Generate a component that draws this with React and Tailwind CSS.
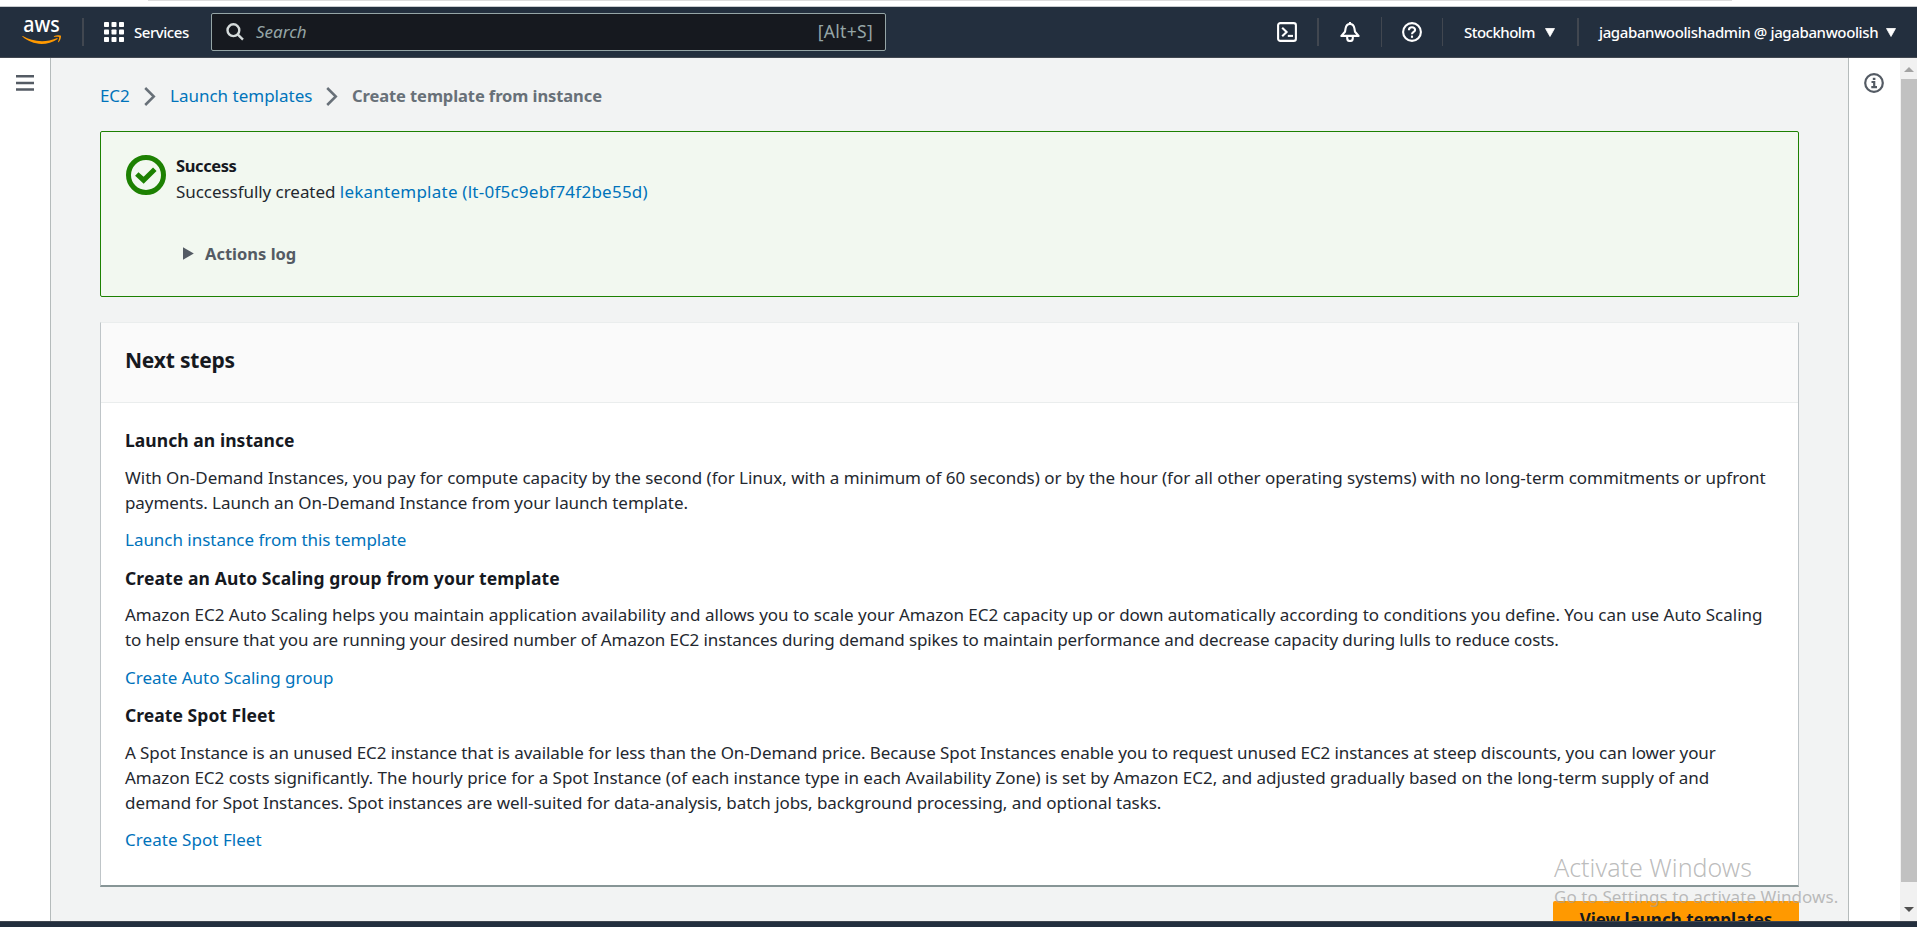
import React from "react";

function AwsLogo() {
  return (
    <svg width="40" height="28" viewBox="0 -1 40 28" className="block overflow-visible">
      <text x="1.300" y="12.800" textLength="36.500" lengthAdjust="spacingAndGlyphs" fill="#fff" fontSize="22.500" fontWeight="500" fontFamily="Noto Sans, sans-serif">aws</text>
      <g transform="translate(0 1.600) scale(.129)" fill="#ff9900">
        <path d="M273.5,143.7c-32.9,24.3-80.7,37.2-121.8,37.2c-57.6,0-109.5-21.3-148.7-56.7c-3.1-2.8-0.3-6.6,3.4-4.4c42.4,24.6,94.7,39.5,148.8,39.5c36.5,0,76.6-7.6,113.5-23.2C274.2,133.6,278.9,139.7,273.5,143.7z" />
        <path d="M287.2,128.1c-4.2-5.4-27.8-2.6-38.5-1.3c-3.2,0.4-3.7-2.4-0.8-4.5c18.8-13.2,49.7-9.4,53.3-5c3.6,4.5-1,35.4-18.6,50.2c-2.7,2.3-5.3,1.1-4.1-1.9C282.5,155.7,291.4,133.4,287.2,128.1z" />
      </g>
    </svg>
  );
}

function GridIcon() {
  return (
    <svg width="20" height="20" viewBox="0 0 20 20" fill="#fff" className="block">
      {[0, 7.5, 15].map((y) => [0, 7.5, 15].map((x) => <rect key={x + "-" + y} x={x} y={y} width="5" height="5" rx="0.8" />))}
    </svg>
  );
}

function SearchIcon() {
  return (
    <svg width="18" height="18" viewBox="0 0 18 18" fill="none" stroke="#d5dbdb" strokeWidth="2.4" className="block">
      <circle cx="7.4" cy="7.2" r="5.9" />
      <path d="M11.6 11.4 17 16.6" />
    </svg>
  );
}

function ShellIcon() {
  return (
    <svg width="20" height="20" viewBox="0 0 20 20" fill="none" stroke="#fff" strokeWidth="2.1" className="block">
      <rect x="1.1" y="1.1" width="17.8" height="17.8" rx="2.2" />
      <path d="M5.2 5.7 9.6 10 5.2 14.3" />
      <path d="M10.8 13.9H16" />
    </svg>
  );
}

function BellIcon() {
  return (
    <svg width="20" height="20" viewBox="0 0 20 20" fill="none" stroke="#fff" strokeWidth="2.1" strokeLinejoin="round" className="block">
      <path d="M10 2C7.4 2 6 3.8 5.6 6.4L5 9.8 1.4 13.9H18.6L15 9.8 14.4 6.4C14 3.8 12.600 2 10 2Z" />
      <path d="M10 0V2" />
      <path d="M7.200 14.500V16.200A2.800 2.800 0 0 0 12.800 16.200V14.500" />
    </svg>
  );
}

function HelpIcon() {
  return (
    <svg width="20" height="20" viewBox="0 0 20 20" fill="none" stroke="#fff" strokeWidth="2.1" className="block">
      <circle cx="10" cy="10" r="8.900" />
      <path d="M6.900 8.200C6.900 6.300 8.200 5.200 10 5.200S13.100 6.300 13.100 7.900C13.100 10 10 9.900 10 12.300" />
      <path d="M10 13.600V15.800" />
    </svg>
  );
}

function Caret() {
  return (
    <svg width="10" height="9" viewBox="0 0 10 9" fill="#fff" className="block">
      <path d="M.5.5H9.500L5 8.500Z" stroke="#fff" strokeWidth=".8" strokeLinejoin="round" />
    </svg>
  );
}

function Chevron() {
  return (
    <svg width="12" height="19" viewBox="0 0 12 19" fill="none" stroke="#687078" strokeWidth="2.500" className="mt-0.5 block">
      <path d="M1.200 1 9.800 9.500 1.200 18" />
    </svg>
  );
}

function InfoIcon() {
  return (
    <svg width="20" height="20" viewBox="0 0 20 20" fill="none" stroke="#545b64" strokeWidth="2.200" className="block">
      <circle cx="10" cy="10" r="8.800" />
      <path d="M8.800 5.900H11.400" strokeWidth="2.200" />
      <path d="M7.500 9H10.200V14M7.300 14.200H13" />
    </svg>
  );
}

function SuccessIcon() {
  return (
    <svg width="40" height="40" viewBox="0 0 40 40" fill="none" stroke="#1d8102" className="block">
      <circle cx="20" cy="20" r="17.500" strokeWidth="5" />
      <path d="M10.800 19 17.600 25.200 28.800 14.300" strokeWidth="5" />
    </svg>
  );
}

function Link({ children, className = "" }) {
  return <a className={"text-[#0073bb] " + className}>{children}</a>;
}

function TopBar() {
  return (
    <header className="flex h-[51px] shrink-0 items-center border-b border-[#414750] bg-[#232f3e] pr-[21px] pl-[22px] text-[15px] font-medium text-white">
      <div className="w-15"><AwsLogo /></div>
      <div className="h-7 w-0.5 bg-[#414750]" />
      <div className="ml-5 flex w-[107px] items-center gap-2.5">
        <GridIcon />
        <span className="tracking-[-0.46px]">Services</span>
      </div>
      <div className="flex h-[38px] w-[675px] items-center rounded-xs border border-[#95a5a6] bg-[#16191f] pr-3 pl-3.5 font-normal text-[#95a5a6]">
        <SearchIcon />
        <span className="ml-3 grow pb-0.5 text-[17px] italic">Search</span>
        <span className="pb-0.5 text-[17.5px] tracking-[0.3px]">[Alt+S]</span>
      </div>
      <div className="ml-[391px]"><ShellIcon /></div>
      <div className="mr-[21px] ml-5 h-7 w-0.5 bg-[#414750]" />
      <BellIcon />
      <div className="mr-5 ml-[21px] h-[30px] w-px bg-[#414750]" />
      <HelpIcon />
      <div className="mr-[21px] ml-5 h-7 w-px bg-[#414750]" />
      <div className="flex w-[113px] items-center gap-2 whitespace-nowrap">
        <span className="w-[73px] tracking-[-0.52px]">Stockholm</span>
        <Caret />
      </div>
      <div className="mr-5 h-7 w-0.5 bg-[#414750]" />
      <div className="flex grow items-center justify-between whitespace-nowrap">
        <span className="tracking-[-0.38px]">jagabanwoolishadmin @ jagabanwoolish</span>
        <Caret />
      </div>
    </header>
  );
}

function Breadcrumb() {
  return (
    <nav className="flex h-[25px] items-center text-[17px]">
      <Link className="w-[44px] tracking-[-0.1px]">EC2</Link>
      <Chevron />
      <Link className="ml-[14px] w-[156px]">Launch templates</Link>
      <Chevron />
      <span className="ml-[14px] text-[16.5px] font-bold tracking-[-0.09px] text-[#687078]">Create template from instance</span>
    </nav>
  );
}

function SuccessBox() {
  return (
    <section className="mt-[23px] flex h-[166px] rounded-xs border border-[#1d8102] bg-[#f2f8f0] pt-[21px] pl-[25px]">
      <div className="mt-0.5"><SuccessIcon /></div>
      <div className="ml-2.5">
        <h2 className="text-[16.5px] font-bold tracking-[-0.4px] text-[#16191f]">Success</h2>
        <p className="mt-px tracking-[-0.05px]">
          Successfully created <Link className="tracking-[0.24px]">lekantemplate (lt-0f5c9ebf74f2be55d)</Link>
        </p>
        <div className="mt-[37px] ml-[7px] flex items-center gap-[11px] text-[16.5px] font-bold text-[#545b64]">
          <svg width="11" height="13" viewBox="0 0 11 13" fill="#545b64"><path d="M0 .3 10.800 6.500 0 12.700Z" /></svg>
          <span>Actions log</span>
        </div>
      </div>
    </section>
  );
}

function NextSteps() {
  return (
    <section className="mt-[25px] h-[565px] border-r border-b-2 border-l border-t border-t-[#eaeded] border-r-[#bfc5c8] border-b-[#879596] border-l-[#bfc5c8] bg-white whitespace-nowrap">
      <div className="flex h-20 items-center border-b border-[#eaeded] bg-[#fafafa] px-6 pb-[5px]">
        <h2 className="text-[21px] font-bold tracking-[-0.2px] text-[#16191f]">Next steps</h2>
      </div>
      <div className="px-6 pt-[25px]">
        <h3 className="text-[17.5px] font-bold tracking-[0.05px] text-[#16191f]">Launch an instance</h3>
        <p className="mt-3">
          <span className="block tracking-[-0.03px]">With On-Demand Instances, you pay for compute capacity by the second (for Linux, with a minimum of 60 seconds) or by the hour (for all other operating systems) with no long-term commitments or upfront</span>
          <span className="block tracking-[-0.08px]">payments. Launch an On-Demand Instance from your launch template.</span>
        </p>
        <Link className="mt-3 block tracking-[-0.03px]">Launch instance from this template</Link>
        <h3 className="mt-[14px] text-[17.5px] font-bold tracking-[0.11px] text-[#16191f]">Create an Auto Scaling group from your template</h3>
        <p className="mt-[11px]">
          <span className="block tracking-[-0.005px]">Amazon EC2 Auto Scaling helps you maintain application availability and allows you to scale your Amazon EC2 capacity up or down automatically according to conditions you define. You can use Auto Scaling</span>
          <span className="block tracking-[-0.11px]">to help ensure that you are running your desired number of Amazon EC2 instances during demand spikes to maintain performance and decrease capacity during lulls to reduce costs.</span>
        </p>
        <Link className="mt-[13px] block">Create Auto Scaling group</Link>
        <h3 className="mt-[13px] text-[17.5px] font-bold tracking-[0.05px] text-[#16191f]">Create Spot Fleet</h3>
        <p className="mt-3">
          <span className="block tracking-[-0.088px]">A Spot Instance is an unused EC2 instance that is available for less than the On-Demand price. Because Spot Instances enable you to request unused EC2 instances at steep discounts, you can lower your</span>
          <span className="block tracking-[-0.012px]">Amazon EC2 costs significantly. The hourly price for a Spot Instance (of each instance type in each Availability Zone) is set by Amazon EC2, and adjusted gradually based on the long-term supply of and</span>
          <span className="block tracking-[-0.07px]">demand for Spot Instances. Spot instances are well-suited for data-analysis, batch jobs, background processing, and optional tasks.</span>
        </p>
        <Link className="mt-3 block tracking-[0.05px]">Create Spot Fleet</Link>
      </div>
    </section>
  );
}

export default function App() {
  return (
    <div className="relative flex h-[927px] w-[1917px] flex-col overflow-hidden bg-white font-['Noto_Sans','Open_Sans',sans-serif] text-[17px] leading-[25px] text-[#24282f]">
      <div className="h-[7px] shrink-0 border-b border-[#c9cccf] pl-[148px]">
        <div className="h-px w-[1584px] bg-[#dcdcdc]" />
      </div>
      <TopBar />
      <div className="flex min-h-0 grow">
        <aside className="w-[51px] shrink-0 border-r border-[#b5bbbb] bg-white pt-[17px] pl-4">
          <svg width="18" height="16" viewBox="0 0 18 16" fill="#545b64" className="block">
            <path d="M0 0H18V2.500H0ZM0 6.700H18V9.200H0ZM0 13.200H18V15.700H0Z" />
          </svg>
        </aside>
        <main className="h-full w-[1797px] overflow-hidden bg-[#f2f3f3] pt-[25px] pr-[49px] pl-[49px]">
          <Breadcrumb />
          <SuccessBox />
          <NextSteps />
          <div className="mt-[14px] flex justify-end">
            <button className="h-10 w-[246px] rounded-xs bg-[#ff9900] pb-1 text-[17px] font-bold text-[#16191f]">View launch templates</button>
          </div>
        </main>
        <aside className="w-[52px] shrink-0 border-l border-[#b5bbbb] bg-white pt-[15px] pl-[15px]">
          <InfoIcon />
        </aside>
        <div className="flex grow flex-col items-center bg-[#f1f1f1] pt-[9px] pb-[9px]">
          <svg width="10" height="5" viewBox="0 0 10 5" fill="#a3a3a3" className="shrink-0"><path d="M0 5 5 0 10 5Z" /></svg>
          <div className="mt-[7px] h-[803px] w-4 self-end bg-[#c1c1c1]" />
          <svg width="10" height="5" viewBox="0 0 10 5" fill="#505050" className="mt-auto shrink-0"><path d="M0 0 5 5 10 0Z" /></svg>
        </div>
      </div>
      <footer className="h-1.5 shrink-0 border-t border-[#414750] bg-[#232f3e]" />
      <div className="absolute top-[851px] left-[1554px] whitespace-nowrap text-[#a0a0a0]/70">
        <div className="text-[25px] leading-8 font-light">Activate Windows</div>
        <div className="mt-px text-[17px] tracking-[0.08px]">Go to Settings to activate Windows.</div>
      </div>
    </div>
  );
}
